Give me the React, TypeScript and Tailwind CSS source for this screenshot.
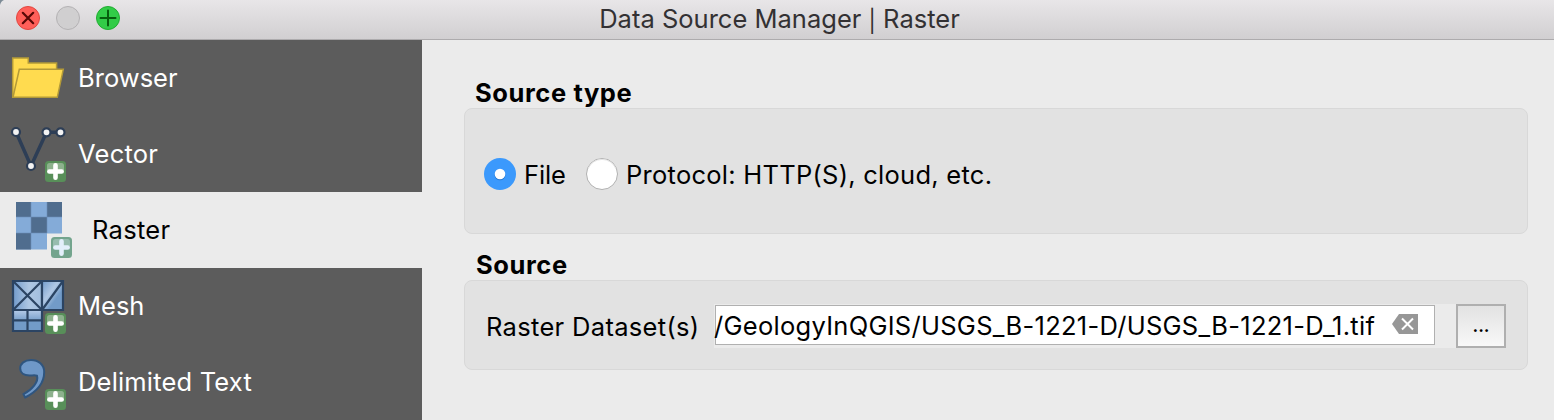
import type { ReactNode } from "react";

function Badge({ x = 45, muted = false }: { x?: number; muted?: boolean }) {
  return (
    <g transform={`translate(${x} 45)`}>
      <rect width="21" height="21" rx="3.5" fill={muted ? "#73a48d" : "#588f59"} />
      <path d="M4.5 2h12A2.5 2.5 0 0 1 19 4.5V9H2V4.500A2.500 2.500 0 0 1 4.500 2Z" fill={muted ? "#97bcaf" : "#8db18d"} />
      <path d="M10.500 4.300v12.400M4.300 10.500h12.400" stroke={muted ? "#e3effb" : "#fff"} strokeWidth="4.600" strokeLinecap="round" />
    </g>
  );
}

function FolderIcon() {
  return (
    <g fill="#ffdb4f" stroke="#b39a38" strokeWidth="1.500">
      <path d="M12.700 57.300V18h15.600v4.900h28.300v8L50 57.300Z" />
      <path d="M19.300 29.300h44L57.300 57.300H13Z" />
    </g>
  );
}

function VectorIcon() {
  return (
    <>
      <g stroke="#2d3e56" fill="none" strokeWidth="3.500">
        <path d="M16 16 31 50 46.500 16.300H60.500" />
      </g>
      <g stroke="#2d3e56" fill="#f3f3f3" strokeWidth="2.200">
        <circle cx="16" cy="16" r="4" />
        <circle cx="46.500" cy="16.300" r="4" />
        <circle cx="60.500" cy="16.300" r="4" />
        <circle cx="31" cy="50" r="4" />
      </g>
      <Badge />
    </>
  );
}

function RasterIcon() {
  return (
    <>
      <path fill="#84abd8" d="M16 10h46v31.500H47v16H16Z" />
      <path fill="#506d8e" d="M16 10h15v15H16ZM47 10h15v15H47ZM31 25h16v16H31ZM16 41h15v16.500H16Z" />
      <path d="M31 10v47M47 10v31M16 25h46M16 41h31" stroke="#6b8fb8" strokeWidth="0.600" />
      <Badge x={51} muted />
    </>
  );
}

function MeshIcon() {
  return (
    <>
      <defs>
        <linearGradient id="m1">
          <stop offset="0" stopColor="#729bcb" />
          <stop offset="0.550" stopColor="#aec7e3" />
          <stop offset="1" stopColor="#a1bddd" />
        </linearGradient>
        <linearGradient id="m2" x2="1" y2="1">
          <stop offset="0" stopColor="#729bcb" />
          <stop offset="0.400" stopColor="#b0c8e4" />
          <stop offset="0.650" stopColor="#729bc8" />
        </linearGradient>
        <linearGradient id="m3" x2="0" y2="1">
          <stop offset="0" stopColor="#b5cbe8" />
          <stop offset="0.550" stopColor="#729bc8" />
        </linearGradient>
      </defs>
      <g stroke="#2b4463" strokeWidth="2.200">
        <path d="M13 13h29v29H13Z" fill="url(#m1)" />
        <path d="M42 13h21v29H42Z" fill="url(#m2)" />
        <path d="M13 42h29v21H13Z" fill="url(#m3)" />
        <path d="m13 13 29 29M42 13 13 42M63 13 42 42M27.500 42v21M13 52.300h29" fill="none" />
      </g>
      <Badge />
    </>
  );
}

function CommaIcon() {
  return (
    <>
      <path
        d="M31 16C24.500 16 20.200 19.500 20.200 24.300c0 4.500 4 7.200 9.300 7.200 3 0 5.500-.6 7.500.2 1.800 6-4.500 13.500-13.500 18.500l1.600 3.300C37 47.500 44.200 39.500 44.200 28 44.200 20.500 38.500 16 31 16Z"
        fill="#6f98c8"
        stroke="#2f557f"
        strokeWidth="2"
      />
      <Badge />
    </>
  );
}

const items: { name: string; icon: ReactNode; style: string }[] = [
  { name: "Browser", icon: <FolderIcon />, style: "tracking-[0.020px]" },
  { name: "Vector", icon: <VectorIcon />, style: "tracking-[0.250px]" },
  { name: "Raster", icon: <RasterIcon />, style: "tracking-[0.300px]" },
  { name: "Mesh", icon: <MeshIcon />, style: "tracking-[0px]" },
  { name: "Delimited Text", icon: <CommaIcon />, style: "tracking-[0.180px]" },
];

export default function App() {
  return (
    <div className="flex h-[420px] w-[1554px] flex-col overflow-hidden bg-[#ebebeb] font-['Inter',sans-serif] text-[25.5px] leading-[30px] whitespace-nowrap text-black">
      <header className="relative flex h-10 shrink-0 items-start justify-center border-b border-[#adabad] bg-linear-to-b from-[#e8e6e8] to-[#d1cfd1]">
        <svg className="absolute top-0 left-0 h-9 w-32" viewBox="0 0 128 36" fill="none">
          <path d="M0 0h4Q1 1 0 5Z" fill="#7d8b96" />
          <circle cx="28" cy="18" r="11.500" fill="#ff5f59" stroke="#e2463f" />
          <path d="m22.800 12.800 10.400 10.400m0-10.400L22.800 23.200" stroke="#580806" strokeWidth="2.200" strokeLinecap="round" />
          <circle cx="68" cy="18" r="11.500" fill="#d0cfd0" stroke="#b4b2b4" />
          <circle cx="108" cy="18" r="11.500" fill="#32cc47" stroke="#20ad31" />
          <path d="M108 10.500v15M100.500 18h15" stroke="#065e0d" strokeWidth="2" strokeLinecap="round" />
        </svg>
        <h1 className="mt-[4px] ml-[5px] tracking-[0.010px] text-[#333133]">
          Data Source Manager <span className="relative top-px inline-block text-[22px] leading-none">|</span> Raster
        </h1>
      </header>
      <div className="flex flex-1">
        <nav className="w-[422px] shrink-0 bg-[#5c5c5c]">
          {items.map((item) => {
            const selected = item.name === "Raster";
            return (
              <div key={item.name} className={selected ? "flex h-[76px] items-center bg-[#ebebeb] text-black" : "flex h-[76px] items-center text-white"}>
                <svg className={selected ? "mr-[12px] h-[76px] w-20 shrink-0" : "mr-[-2px] h-[76px] w-20 shrink-0"} viewBox="0 0 80 76" fill="none">
                  {item.icon}
                </svg>
                <span className={item.style}>{item.name}</span>
              </div>
            );
          })}
        </nav>
        <main className="flex-1 pt-[38px] pr-[26px] pl-[42px]">
          <h2 className="pl-[11px] font-bold tracking-[0.600px]">Source type</h2>
          <section className="flex h-[126px] items-center rounded-[8px] border border-[#d8d8d8] bg-[#e2e2e2] pl-[19px]">
            <svg className="mt-[6px] h-8 w-8" viewBox="0 0 32 32">
              <circle cx="16" cy="16" r="16" fill="#3b99fc" />
              <circle cx="16" cy="16.800" r="5.500" fill="#2678d1" />
              <circle cx="16" cy="16" r="5.300" fill="#fff" />
            </svg>
            <span className="mt-[8px] ml-[8px] w-[62px] tracking-[-0.100px]">File</span>
            <svg className="mt-[6px] h-8 w-8" viewBox="0 0 32 32">
              <circle cx="16" cy="16" r="15.500" fill="#fff" stroke="#b0b0b0" />
              <path d="M2 11A15 15 0 0 1 30 11" fill="none" stroke="#e5e5e5" />
            </svg>
            <span className="mt-[8px] ml-[8px] tracking-[0.260px]">Protocol: HTTP(S), cloud, etc.</span>
          </section>
          <h2 className="mt-[16px] pl-[12px] font-bold tracking-[0.600px]">Source</h2>
          <section className="flex h-[90px] items-center rounded-[8px] border border-[#d8d8d8] bg-[#e2e2e2] pl-[21px]">
            <span className="mt-[4px] w-[228px] shrink-0 tracking-[0.320px]">Raster Dataset(s)</span>
            <div className="mt-[2px] flex h-[44px] w-[742px] shrink-0 items-start bg-[#ebebeb] pt-px pl-px">
              <div className="flex h-[40px] w-[720px] items-center border border-[#b0b0b0] bg-white">
                <span className="mt-[2px] ml-[-2px] w-[678px] tracking-[0.280px]">/GeologyInQGIS/USGS_B-1221-D/USGS_B-1221-D_1.tif</span>
                <svg className="mt-[-2px] h-5 w-[26px] shrink-0" viewBox="0 0 26 20">
                  <path d="M0 10 7 0h19v20H7Z" fill="#979797" />
                  <path d="m10 4.500 11 11m0-11-11 11" stroke="#fff" strokeWidth="2" />
                </svg>
              </div>
            </div>
            <button className="mt-[2px] flex h-[44px] w-[50px] shrink-0 items-center justify-center border-2 border-[#afafaf] bg-linear-to-b from-[#e2e2e2] to-[#f8f8f8] text-[18px] font-semibold">...</button>
          </section>
        </main>
      </div>
    </div>
  );
}
